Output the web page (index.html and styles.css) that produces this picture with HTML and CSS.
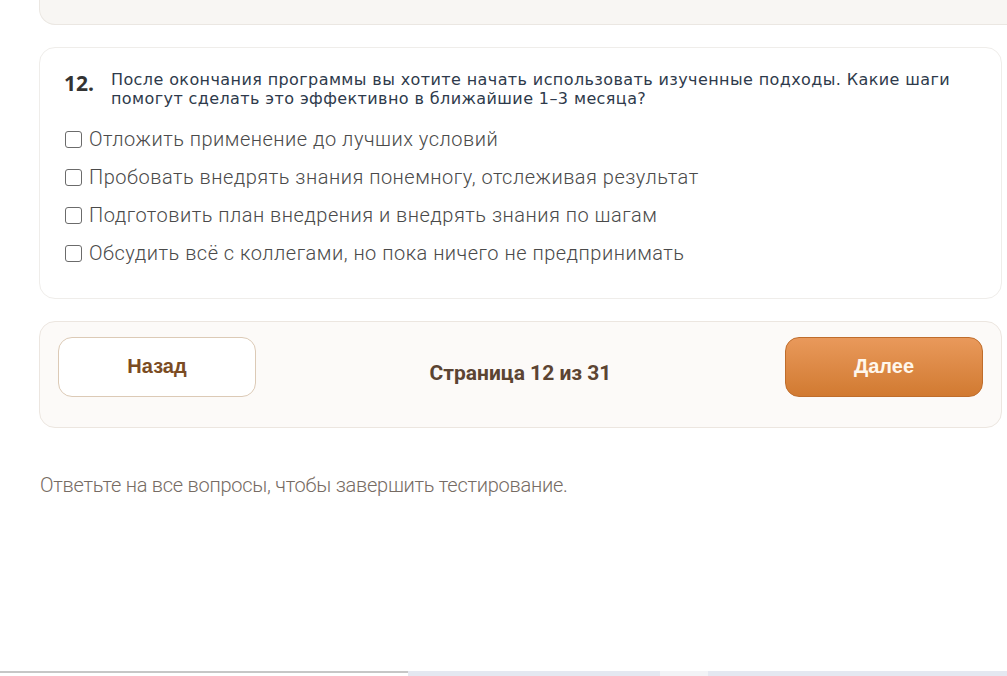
FILE: index.html
```html
<html>
<head>
<meta name="viewport" content="width=device-width, initial-scale=1">
<link rel="stylesheet" href="styles.css">
</head>
<body>
	<div class="page">
		<div class="card prev-card"></div>

		<div class="card question">
			<div class="q-head">
				<span class="q-num">12.</span>
				<p class="q-text">После окончания программы вы хотите начать использовать изученные подходы. Какие шаги помогут сделать это эффективно в ближайшие 1–3 месяца?</p>
			</div>
			<ul class="options">
				<li><label><input type="checkbox"><span>Отложить применение до лучших условий</span></label></li>
				<li><label><input type="checkbox"><span>Пробовать внедрять знания понемногу, отслеживая результат</span></label></li>
				<li><label><input type="checkbox"><span>Подготовить план внедрения и внедрять знания по шагам</span></label></li>
				<li><label><input type="checkbox"><span>Обсудить всё с коллегами, но пока ничего не предпринимать</span></label></li>
			</ul>
		</div>

		<div class="card nav">
			<button class="btn back">Назад</button>
			<div class="page-info">Страница 12 из 31</div>
			<button class="btn next">Далее</button>
		</div>

		<p class="hint">Ответьте на все вопросы, чтобы завершить тестирование.</p>
	</div>

	<div class="bottom-bar">
		<div class="bar-left"></div>
		<div class="bar-mid"></div>
		<div class="bar-light"></div>
		<div class="bar-right"></div>
	</div>
</body>
</html>
```

FILE: styles.css
```css
* {
	box-sizing: border-box;
}
body {
	margin: 0;
	background: #fff;
	font-family: Roboto, sans-serif;
	overflow: hidden;
}
.page {
	padding: 0 0 0 39px;
	width: 1002px;
}
.card {
	border: 1px solid #ebe7e2;
	border-radius: 16px;
	margin-bottom: 22px;
}
.prev-card {
	height: 26px;
	margin-top: -1px;
	border-top: none;
	border-radius: 0 0 16px 16px;
	background: #f8f6f3;
	width: 1000px;
}
.question {
	background: #fff;
	border-color: #efedea;
	padding: 22px 24px 22px 24px;
	height: 252px;
}
.q-head {
	display: flex;
	align-items: flex-start;
}
.q-num {
	font-family: "Open Sans", sans-serif;
	font-weight: 700;
	font-size: 21px;
	color: #333;
	width: 47px;
	flex: none;
	line-height: 27px;
}
.q-text {
	margin: 0;
	font-family: "DejaVu Sans", sans-serif;
	font-size: 16px;
	line-height: 19px;
	color: #2e3a4b;
	letter-spacing: 0.4px;
}
.options {
	list-style: none;
	margin: 12px 0 0;
	padding: 0;
}
.options li {
	height: 38px;
}
.options label {
	display: flex;
	align-items: center;
	gap: 7px;
	font-size: 20px;
	font-weight: 300;
	letter-spacing: 0.5px;
	color: #4a4a4a;
	line-height: 38px;
}
.options input {
	appearance: none;
	-webkit-appearance: none;
	width: 17px;
	height: 17px;
	margin: 0 0 0 1px;
	border: 1.5px solid #6b6b6b;
	border-radius: 3px;
	background: #fff;
	flex: none;
}
.nav {
	background: #fcfaf8;
	border-color: #ece6e0;
	height: 107px;
	padding: 15px 18px 0 18px;
	display: flex;
	align-items: flex-start;
	justify-content: space-between;
}
.btn {
	width: 198px;
	height: 60px;
	border-radius: 14px;
	font-family: "Liberation Sans", sans-serif;
	font-weight: 700;
	font-size: 20px;
	cursor: pointer;
	padding: 0 0 1px;
}
.back {
	background: #fff;
	border: 1px solid #dccab6;
	color: #7b4c23;
}
.next {
	background: linear-gradient(#e9995b, #d17a31);
	border: 1px solid #bf6d2c;
	color: #fff7ec;
}
.page-info {
	font-weight: 700;
	font-size: 21px;
	color: #5b4432;
	padding-top: 24px;
}
.hint {
	margin: 45px 0 0 1px;
	font-size: 20px;
	font-weight: 300;
	letter-spacing: -0.25px;
	color: #766b63;
}
.bottom-bar {
	position: fixed;
	left: 0;
	right: 0;
	bottom: 0;
	height: 5px;
	display: flex;
}
.bar-left {
	width: 408px;
	background: #fff;
	border-top: 2px solid #c6c6c6;
}
.bar-mid {
	width: 252px;
	background: #e4e8f1;
}
.bar-light {
	width: 48px;
	background: #f2f3f6;
}
.bar-right {
	flex: 1;
	background: #e4e8f1;
}
```
